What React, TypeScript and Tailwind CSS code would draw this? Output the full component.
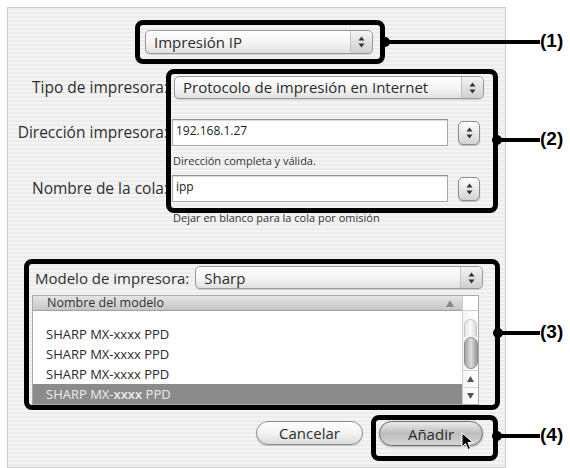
import React from 'react';

const Arrows = ({ color = '#333' }: { color?: string }) => (
  <svg width="7" height="12" viewBox="0 0 7 12">
    <polygon points="3.5,0.5 6.5,4.5 0.5,4.5" fill={color} />
    <polygon points="0.5,7.5 6.5,7.5 3.5,11.5" fill={color} />
  </svg>
);

const Popup = ({ label, className }: { label: string; className: string }) => (
  <div
    className={`flex items-stretch rounded-[5px] border border-[#9a9a9a] bg-gradient-to-b from-[#ffffff] via-[#f5f5f5] to-[#e1e1e1] shadow-[0_1px_1px_rgba(0,0,0,0.15)] ${className}`}
  >
    <div className="flex flex-1 items-center pl-[8px] text-[15px] text-[#2b2b2b]">{label}</div>
    <div className="flex w-[22px] items-center justify-center rounded-r-[5px] border-l border-[#c4c4c4] bg-gradient-to-b from-[#f4f4f4] to-[#cfcfcf]">
      <Arrows />
    </div>
  </div>
);

const Stepper = () => (
  <div className="ml-[10px] flex h-[24px] w-[22px] items-center justify-center rounded-[5px] border border-[#8c8c8c] bg-gradient-to-b from-[#ffffff] to-[#d3d3d3] shadow-[0_1px_1px_rgba(0,0,0,0.2)]">
    <Arrows />
  </div>
);

const Field = ({ value }: { value: string }) => (
  <div className="ml-[4px] flex h-[27px] w-[276px] items-start border border-[#a8a8a8] border-t-[#8f8f8f] bg-white pl-[3px] pt-[2px] text-[12px] text-[#222] shadow-[inset_0_1px_1px_rgba(0,0,0,0.15)]">
    {value}
  </div>
);

const Label = ({ children }: { children: React.ReactNode }) => (
  <div className="w-[160px] whitespace-nowrap text-right text-[15.5px] text-[#2f2f2f]">{children}</div>
);

const Callout = ({ className }: { className: string }) => (
  <div className={`absolute rounded-[8px] border-[5px] border-black ${className}`} />
);

const Dot = ({ x, y }: { x: number; y: number }) => (
  <div
    className="absolute h-[10px] w-[10px] rounded-full bg-black"
    style={{ left: x - 5, top: y - 5 }}
  />
);

const rows = ['SHARP MX-xxxx PPD', 'SHARP MX-xxxx PPD', 'SHARP MX-xxxx PPD'];

export default function App() {
  return (
    <div className="relative h-[468px] w-[570px] overflow-hidden bg-white font-['Open_Sans',sans-serif]">
      <div className="ml-[7px] mt-[7px] h-[461px] w-[499px] border border-[#cdcdcd] bg-[repeating-linear-gradient(to_bottom,#ececec_0px,#ececec_2px,#f4f4f4_2px,#f4f4f4_4px)]">
        <div className="pl-[137px] pt-[22px]">
          <Popup label="Impresión IP" className="h-[24px] w-[228px]" />
        </div>

        <div className="mt-[22px] flex items-center">
          <Label>Tipo de impresora:</Label>
          <Popup label="Protocolo de impresión en Internet" className="ml-[6px] h-[23px] w-[310px]" />
        </div>

        <div className="mt-[20px] flex items-center">
          <Label>Dirección impresora:</Label>
          <Field value="192.168.1.27" />
          <Stepper />
        </div>
        <div className="mt-[8px] pl-[165px] text-[11px] leading-[14px] text-[#333]">
          Dirección completa y válida.
        </div>

        <div className="mt-[7px] flex items-center">
          <Label>Nombre de la cola:</Label>
          <Field value="ipp" />
          <Stepper />
        </div>
        <div className="mt-[9px] pl-[165px] text-[11px] leading-[14px] text-[#333]">
          Dejar en blanco para la cola por omisión
        </div>

        <div className="mt-[41px] flex items-center pl-[27px]">
          <div className="text-[15px] text-[#2f2f2f]">Modelo de impresora:</div>
          <Popup label="Sharp" className="ml-[6px] h-[23px] w-[288px]" />
        </div>

        <div className="ml-[24px] mt-[6px] flex h-[110px] w-[447px] border border-[#a9a9a9] bg-white">
          <div className="flex flex-1 flex-col">
            <div className="flex h-[15px] items-center justify-between border-b border-[#a0a0a0] bg-gradient-to-b from-[#e4e4e4] to-[#c6c6c6] pl-[14px] pr-[8px] text-[12.5px] text-[#333]">
              <span>Nombre del modelo</span>
              <svg width="8" height="7" viewBox="0 0 8 7">
                <polygon points="4,0 8,7 0,7" fill="#8a8a8a" />
              </svg>
            </div>
            <div className="h-[14px]" />
            {rows.map((r, i) => (
              <div key={i} className="flex h-[20px] items-center pl-[13px] text-[13px] text-[#2a2a2a]">
                {r}
              </div>
            ))}
            <div className="flex h-[20px] items-center bg-[#8b8b8b] pl-[13px] text-[13px] text-[#ececec]">
              SHARP MX-<span className="font-semibold">xxxx</span>&nbsp;PPD
            </div>
          </div>
          <div className="flex w-[16px] flex-col border-l border-[#cfcfcf] bg-gradient-to-r from-[#f4f4f4] to-[#ffffff]">
            <div className="h-[15px] border-b border-[#d0d0d0] bg-white" />
            <div className="mx-auto mt-[8px] h-[18px] w-[13px] rounded-t-full border border-b-0 border-[#c2c2c2] bg-gradient-to-r from-[#e6e6e6] via-[#fafafa] to-[#dcdcdc]" />
            <div className="mx-auto h-[32px] w-[14px] rounded-full border border-[#8e8e8e] bg-gradient-to-r from-[#a3a3a3] via-[#dedede] to-[#999999]" />
            <div className="flex-1" />
            <div className="flex h-[17px] items-center justify-center border-t border-[#d6d6d6]">
              <svg width="7" height="6" viewBox="0 0 7 6">
                <polygon points="3.5,0 7,6 0,6" fill="#555" />
              </svg>
            </div>
            <div className="flex h-[17px] items-center justify-center border-t border-[#d6d6d6]">
              <svg width="7" height="6" viewBox="0 0 7 6">
                <polygon points="0,0 7,0 3.5,6" fill="#555" />
              </svg>
            </div>
          </div>
        </div>

        <div className="mt-[16px] flex justify-end gap-[16px] pr-[22px]">
          <div className="flex h-[24px] w-[107px] items-center justify-center rounded-full border border-[#8e8e8e] bg-gradient-to-b from-[#ffffff] via-[#f3f3f3] to-[#dcdcdc] text-[15px] text-[#2b2b2b] shadow-[0_1px_1px_rgba(0,0,0,0.2)]">
            Cancelar
          </div>
          <div className="flex h-[25px] w-[104px] items-center justify-center rounded-full border border-[#6f6f6f] bg-gradient-to-b from-[#ececec] via-[#bdbdbd] to-[#d6d6d6] text-[15px] text-[#2b2b2b] shadow-[0_1px_2px_rgba(0,0,0,0.3)]">
            Añadir
          </div>
        </div>
      </div>

      {/* cursor */}
      <svg className="absolute left-[461px] top-[432px]" width="13" height="19" viewBox="0 0 13 19">
        <polygon points="1,1 1,15 4.5,11.5 7,17.5 9.5,16.5 7,10.5 12,10.5" fill="#000" stroke="#fff" strokeWidth="1" />
      </svg>

      {/* callouts */}
      <Callout className="left-[135px] top-[20px] h-[44px] w-[250px]" />
      <Callout className="left-[166px] top-[69px] h-[144px] w-[332px]" />
      <Callout className="left-[24px] top-[259px] h-[151px] w-[476px]" />
      <Callout className="left-[371px] top-[415px] h-[46px] w-[127px]" />

      <div className="absolute left-[384px] top-[40px] h-[4px] w-[156px] bg-black" />
      <div className="absolute left-[497px] top-[138px] h-[4px] w-[43px] bg-black" />
      <div className="absolute left-[498px] top-[331px] h-[4px] w-[42px] bg-black" />
      <div className="absolute left-[496px] top-[434px] h-[4px] w-[44px] bg-black" />
      <Dot x={385} y={42} />
      <Dot x={497} y={140} />
      <Dot x={498} y={333} />
      <Dot x={497} y={436} />

      <div className="absolute left-[540px] top-[31px] font-['Liberation_Sans',sans-serif] text-[19px] font-bold leading-[20px]">(1)</div>
      <div className="absolute left-[540px] top-[129px] font-['Liberation_Sans',sans-serif] text-[19px] font-bold leading-[20px]">(2)</div>
      <div className="absolute left-[540px] top-[322px] font-['Liberation_Sans',sans-serif] text-[19px] font-bold leading-[20px]">(3)</div>
      <div className="absolute left-[540px] top-[425px] font-['Liberation_Sans',sans-serif] text-[19px] font-bold leading-[20px]">(4)</div>
    </div>
  );
}
